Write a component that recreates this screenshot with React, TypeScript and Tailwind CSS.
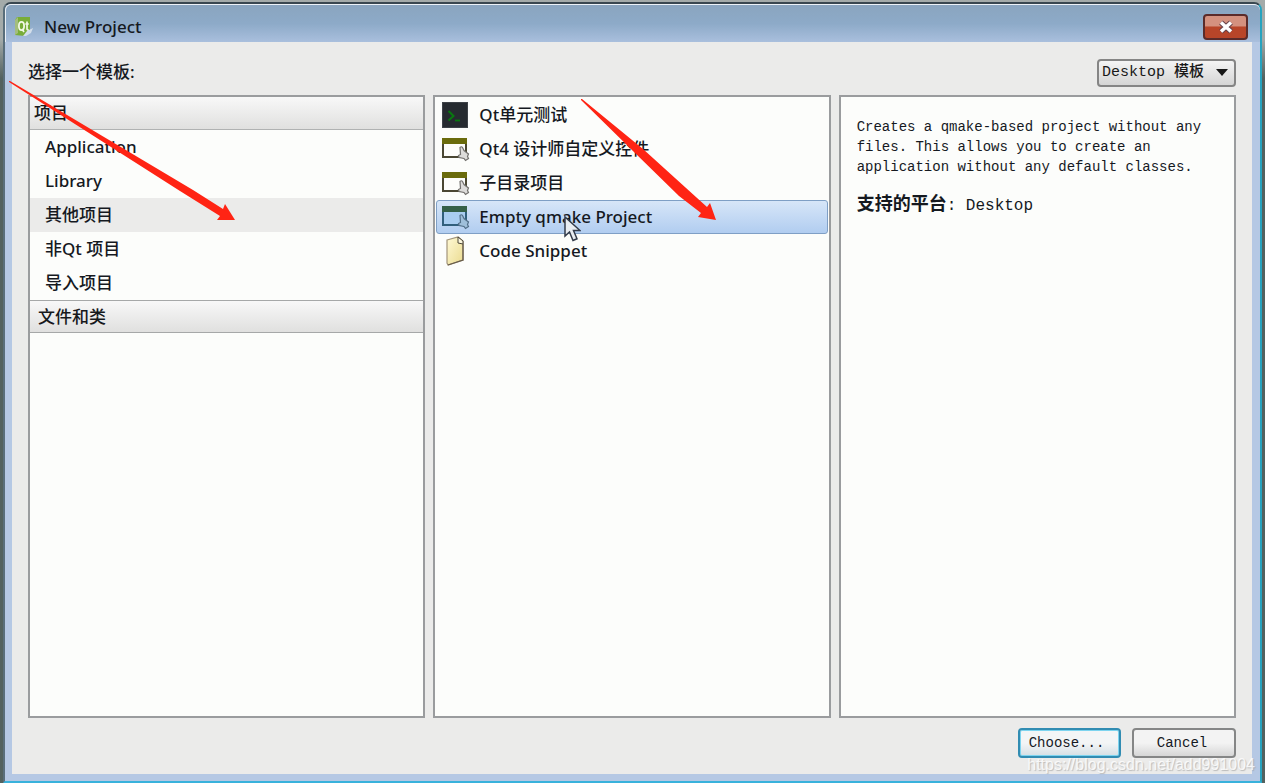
import React, { useState } from "react";

const UI = "font-['Noto_Sans','Noto_Sans_CJK_SC',sans-serif] font-medium";
const MONO = "font-['Liberation_Mono','Noto_Sans_CJK_SC',monospace]";

function QtLogo() {
  return (
    <svg width="20" height="20" viewBox="0 0 20 20" aria-hidden="true">
      <path d="M3 0H16V14L11 19L1 18V3Z" fill="#79ad39" />
      <path d="M1 3L4 0V16L1 18Z" fill="#a3bd7d" />
      <ellipse cx="7.5" cy="9" rx="2.6" ry="4.2" fill="none" stroke="#f3f8e6" strokeWidth="1.8" />
      <path d="M8 12l2 3M13 4.500v7q0 2 2 1.500M11.300 7h3.500" fill="none" stroke="#f3f8e6" strokeWidth="1.700" />
      <path d="M9 19L13 14L19 11L17 16L12 19Z" fill="#d3deea" />
    </svg>
  );
}

function TerminalIcon() {
  return (
    <svg width="26" height="26" viewBox="0 0 26 26" aria-hidden="true">
      <rect x="0.500" y="0.500" width="25" height="25" fill="#262b30" stroke="#3d4247" />
      <path d="M6.500 9l5 5-5 4.500" fill="none" stroke="#08790f" strokeWidth="2" />
      <path d="M13 18.500h5" stroke="#08790f" strokeWidth="1.800" />
    </svg>
  );
}

function WindowIcon({ active }: { active?: boolean }) {
  const edge = active ? "#315f7c" : "#4a4733";
  return (
    <svg width="28" height="26" viewBox="0 0 28 26" aria-hidden="true">
      <rect x="1" y="3" width="23" height="18" fill={active ? "#a9cdf0" : "#fdfdfb"} stroke={edge} strokeWidth="2" />
      <rect x="0" y="2" width="25" height="6" fill={active ? "#356048" : "#6a6b0c"} />
      <path
        d="M18 11.500q1.500-1.500 2.500 0L22 14.500L26.500 18L25.500 20.500L26.500 22.500L23.500 24.500L22 22.500L17 21.500L16.500 19.500L18.500 18.500Z"
        fill={active ? "#9fbfda" : "#dddcda"}
        stroke={active ? "#526f88" : "#73716e"}
        strokeWidth="1.200"
      />
    </svg>
  );
}

function SnippetIcon() {
  return (
    <svg width="26" height="30" viewBox="0 0 26 30" aria-hidden="true">
      <defs>
        <linearGradient id="paper" x1="0" x2="1" y1="0" y2="1">
          <stop offset="0" stopColor="#fff9d5" />
          <stop offset="1" stopColor="#eadb8f" />
        </linearGradient>
      </defs>
      <path d="M5 4L16 1L21 5V24L6 29L5 27Z" fill="url(#paper)" stroke="#a2957a" strokeWidth="1.200" />
      <path d="M16 1V7L21 8V5Z" fill="#fdf8df" stroke="#4c4638" />
      <path d="M21 8V24L6 29" fill="none" stroke="#685d4a" strokeWidth="1.300" />
    </svg>
  );
}

function Pointer() {
  return (
    <svg className="pointer-events-none absolute top-4 left-32 z-10" width="17" height="26" viewBox="0 0 17 26" aria-hidden="true">
      <path d="M1 1V20L5.500 16L9 24.500L13 22.800L9.500 14.500H16Z" fill="#e9edf2" stroke="#333b49" strokeWidth="1.500" />
    </svg>
  );
}

const categories = ["Application", "Library", "其他项目", "非Qt 项目", "导入项目"];
const templates = ["Qt单元测试", "Qt4 设计师自定义控件", "子目录项目", "Empty qmake Project", "Code Snippet"];

function TemplateIcon({ index, active }: { index: number; active: boolean }) {
  if (index === 0) return <TerminalIcon />;
  if (index === 4) return <SnippetIcon />;
  return <WindowIcon active={active} />;
}

const panel = "min-w-0 border-2 border-[#9a9c9e] bg-[#fcfdfb]";
const groupHeader =
  "flex items-center bg-linear-to-b from-[#f8f8f8] to-[#e0e0df] text-[#17191c]";

export default function App() {
  const [category, setCategory] = useState(2);
  const [template, setTemplate] = useState(3);

  return (
    <div className={`relative flex min-h-screen flex-col overflow-hidden bg-linear-to-b from-[#a4abaa] from-5% to-[#536260] to-10% pt-0.5 pr-[3px] pl-[3px] text-[17px] leading-6 text-[#15191f] ${UI}`}>
      <main className="flex flex-1 flex-col rounded-t-lg border-2 border-t-[#394750] border-r-[#27a3bf] border-b-[#39b2dc] border-l-[#596e7b] bg-[#b5c8e4] pr-2 pb-[7px] pl-[7px]">
        <header className="-mr-2 -ml-[7px] flex h-[38px] items-center justify-between rounded-t-md border-t border-l border-white/80 bg-linear-to-b from-[#8aa5bf] via-[#8daac8] to-[#a9bfdd] pr-3 pl-2 pt-1.5">
          <div className="flex items-center gap-2.5">
            <QtLogo />
            <h1>New Project</h1>
          </div>
          <button
            aria-label="Close"
            className="flex h-[26px] w-[45px] items-center justify-center rounded-sm border-2 border-[#5b2b2a] bg-linear-to-b from-[#d4917f] from-45% to-[#b84529] to-50%"
          >
            <svg width="18" height="14" viewBox="0 0 18 14" aria-hidden="true">
              <path d="M4 2.500L14 11.500M14 2.500L4 11.500" stroke="#654149" strokeWidth="5.500" />
              <path d="M4 2.500L14 11.500M14 2.500L4 11.500" stroke="#fff" strokeWidth="3.500" />
            </svg>
          </button>
        </header>

        <div className="flex flex-1 flex-col bg-[#ebebea] px-4 pt-4 pb-4">
          <div className="flex items-start justify-between">
            <label htmlFor="kit" className="pt-0.5">选择一个模板:</label>
            <div className="relative">
              <select
                id="kit"
                className={`h-7 w-[139px] appearance-none rounded-sm border-2 border-[#858585] bg-linear-to-b from-[#f4f4f4] to-[#d5d5d5] pl-[3px] text-[15px] leading-6 text-[#181818] ${MONO}`}
              >
                <option>Desktop 模板</option>
              </select>
              <svg className="pointer-events-none absolute top-[11px] right-2" width="12" height="7" viewBox="0 0 12 7" aria-hidden="true">
                <path d="M0 0H12L6 7Z" fill="#171717" />
              </svg>
            </div>
          </div>

          <div className="mt-2 grid flex-1 grid-cols-3 gap-2">
            <nav className={panel}>
              <h2 className={`${groupHeader} h-[33px] border-b border-[#b0b2b2] pl-1`}>项目</h2>
              <ul>
                {categories.map((name, i) => (
                  <li key={name}>
                    <button
                      onClick={() => setCategory(i)}
                      className={`flex h-[34px] w-full items-center pl-[15px] text-left ${i === category ? "bg-[#ebebea]" : ""}`}
                    >
                      {name}
                    </button>
                  </li>
                ))}
              </ul>
              <h2 className={`${groupHeader} h-[33px] border-y border-[#a6a8a8] pl-2`}>文件和类</h2>
            </nav>

            <ul className={`${panel} px-px pt-px`}>
              {templates.map((name, i) => (
                <li key={name} className="relative">
                  <button
                    onClick={() => setTemplate(i)}
                    className={`flex h-[34px] w-full items-center rounded-[3px] border pl-[5px] text-left ${
                      i === template
                        ? "border-[#7f9fc5] bg-linear-to-b from-[#d7e6f8] to-[#b1cdf0]"
                        : "border-transparent"
                    }`}
                  >
                    <span className="flex w-[37px] shrink-0">
                      <TemplateIcon index={i} active={i === template} />
                    </span>
                    {name}
                  </button>
                  {i === 3 && <Pointer />}
                </li>
              ))}
            </ul>

            <section className={`${panel} px-4 pt-5 ${MONO}`}>
              <p className="text-sm leading-5">
                Creates a qmake-based project without any files. This allows you to create an application without any default classes.
              </p>
              <p className="mt-4 text-base leading-6">
                <b className="text-lg leading-6">支持的平台</b>: Desktop
              </p>
            </section>
          </div>

          <footer className={`mt-2.5 flex justify-end gap-[11px] text-sm ${MONO}`}>
            <button className="h-[30px] w-[103px] rounded-sm border-2 border-[#318cb2] bg-linear-to-b from-[#f3f5f6] from-50% to-[#d5dfe4] pr-1.5 shadow-[inset_0_0_0_1px_#7dd4ef]">
              Choose...
            </button>
            <button className="h-[30px] w-[104px] rounded-sm border-2 border-[#858686] bg-linear-to-b from-[#f3f3f3] from-50% to-[#d6d6d6] pr-1">
              Cancel
            </button>
          </footer>
        </div>
      </main>

      <svg className="pointer-events-none absolute top-20 left-2 z-20" width="230" height="144" viewBox="8 80 230 144" aria-hidden="true">
        <path d="M9 81L10 81L193 190L223 209L225 204L235 220L217 220L220 216L180 191L9 82Z" fill="#ff2414" />
      </svg>
      <svg className="pointer-events-none absolute top-24 left-[580px] z-20" width="140" height="128" viewBox="580 96 140 128" aria-hidden="true">
        <path d="M581 99L582 99L643 149L707 207L710 203L716 220L698 217L701 213L679 196L635 153L581 100Z" fill="#ff2414" />
      </svg>
      <span className="pointer-events-none absolute right-2.5 bottom-1.5 z-20 font-['Liberation_Sans',sans-serif] text-base leading-6 font-normal text-white/80 [text-shadow:1px_1px_1px_#9999]">
        https://blog.csdn.net/add991004
      </span>
    </div>
  );
}
